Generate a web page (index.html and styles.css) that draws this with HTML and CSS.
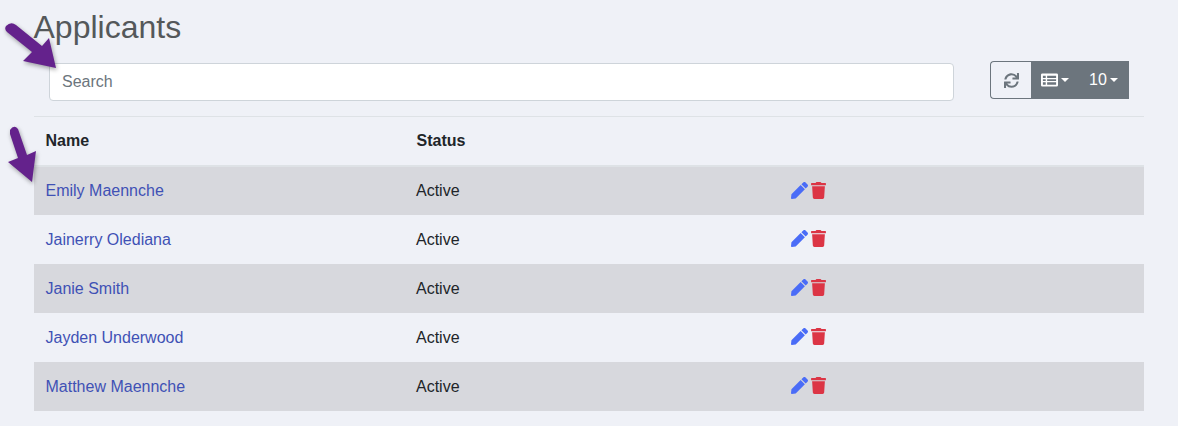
FILE: index.html
```html
<!DOCTYPE html>
<html lang="en">
<head>
<meta charset="utf-8">
<title>Applicants</title>
<link rel="stylesheet" href="styles.css">
</head>
<body>
<main class="page">
  <h1 class="title">Applicants</h1>
  <div class="toolbar">
    <input class="search" type="text" placeholder="Search">
    <div class="btn-group">
      <button class="btn btn-outline" type="button" aria-label="Refresh">
        <svg class="ic-refresh" viewBox="0 0 512 512"><path fill="#6c757d" d="M440.65 12.57l4 82.77A247.16 247.16 0 0 0 255.83 8C134.73 8 33.91 94.92 12.29 209.82A12 12 0 0 0 24.09 224h49.05a12 12 0 0 0 11.67-9.26 175.91 175.91 0 0 1 317-56.94l-101.46-4.86a12 12 0 0 0-12.57 12v47.41a12 12 0 0 0 12 12H500a12 12 0 0 0 12-12V12a12 12 0 0 0-12-12h-47.37a12 12 0 0 0-11.98 12.57zM255.83 432a175.61 175.61 0 0 1-146-77.8l101.8 4.87a12 12 0 0 0 12.57-12v-47.4a12 12 0 0 0-12-12H12a12 12 0 0 0-12 12V500a12 12 0 0 0 12 12h47.35a12 12 0 0 0 12-12.6l-4.15-82.57A247.17 247.17 0 0 0 255.83 504c121.11 0 221.93-86.92 243.55-201.82a12 12 0 0 0-11.8-14.18h-49.05a12 12 0 0 0-11.67 9.26A175.86 175.86 0 0 1 255.83 432z"/></svg>
      </button>
      <button class="btn btn-solid btn-columns" type="button" aria-label="Columns">
        <svg class="ic-table" viewBox="0 0 18 14"><path fill="#fff" fill-rule="evenodd" d="M1.500 0h15A1.500 1.500 0 0 1 18 1.500v11a1.500 1.500 0 0 1-1.500 1.500h-15A1.500 1.500 0 0 1 0 12.500v-11A1.500 1.500 0 0 1 1.500 0zM2 2.500V5h3V2.500zM6.500 2.500V5H16V2.500zM2 6.200v1.800h3V6.200zM6.500 6.200v1.800H16V6.200zM2 9.300V12h3V9.300zM6.500 9.300V12H16V9.300z"/></svg>
        <span class="caret"></span>
      </button>
      <button class="btn btn-solid btn-size" type="button">10<span class="caret"></span></button>
    </div>
  </div>
  <table class="grid">
    <thead>
      <tr><th class="col-name">Name</th><th class="col-status">Status</th><th></th></tr>
    </thead>
    <tbody>
      <tr><td><a href="#">Emily Maennche</a></td><td>Active</td><td class="actions"><svg class="ic-pen" viewBox="0 0 512 512"><use href="#pen"/></svg><svg class="ic-trash" viewBox="0 0 448 512"><use href="#trash"/></svg></td></tr>
      <tr><td><a href="#">Jainerry Olediana</a></td><td>Active</td><td class="actions"><svg class="ic-pen" viewBox="0 0 512 512"><use href="#pen"/></svg><svg class="ic-trash" viewBox="0 0 448 512"><use href="#trash"/></svg></td></tr>
      <tr><td><a href="#">Janie Smith</a></td><td>Active</td><td class="actions"><svg class="ic-pen" viewBox="0 0 512 512"><use href="#pen"/></svg><svg class="ic-trash" viewBox="0 0 448 512"><use href="#trash"/></svg></td></tr>
      <tr><td><a href="#">Jayden Underwood</a></td><td>Active</td><td class="actions"><svg class="ic-pen" viewBox="0 0 512 512"><use href="#pen"/></svg><svg class="ic-trash" viewBox="0 0 448 512"><use href="#trash"/></svg></td></tr>
      <tr><td><a href="#">Matthew Maennche</a></td><td>Active</td><td class="actions"><svg class="ic-pen" viewBox="0 0 512 512"><use href="#pen"/></svg><svg class="ic-trash" viewBox="0 0 448 512"><use href="#trash"/></svg></td></tr>
    </tbody>
  </table>
</main>

<svg class="arrow arrow-search" viewBox="0 0 60 50"><path d="M3 4 Q8 -1 13 3 L39 24 L46 16 L53 46 L20 39 L29 30 L4 10 Q1 7 3 4Z"/></svg>
<svg class="arrow arrow-row" viewBox="0 0 40 60"><path d="M9 5 Q13 -1 17 4 L26 30 L35 26 L31 57 L7 37 L17 33 L9 9Z"/></svg>

<svg class="defs" aria-hidden="true">
  <defs>
    <path id="pen" fill="#4a6cf7" d="M290.740 93.240l128.020 128.020-277.990 277.990-114.140 12.600C11.350 513.540-1.560 500.620.14 485.340l12.700-114.220 277.900-277.880zm207.200-19.060l-60.110-60.110c-18.750-18.750-49.160-18.750-67.910 0l-56.550 56.550 128.020 128.020 56.550-56.550c18.750-18.760 18.750-49.160 0-67.910z"/>
    <path id="trash" fill="#dc3545" d="M432 32H312l-9.400-18.700A24 24 0 0 0 281.100 0H166.800a23.720 23.720 0 0 0-21.400 13.300L136 32H16A16 16 0 0 0 0 48v32a16 16 0 0 0 16 16h416a16 16 0 0 0 16-16V48a16 16 0 0 0-16-16zM53.200 467a48 48 0 0 0 47.900 45h245.800a48 48 0 0 0 47.900-45L416 128H32z"/>
  </defs>
</svg>
</body>
</html>
```
FILE: styles.css
```css
* { box-sizing: border-box; }

body {
  margin: 0;
  background: #eff1f7;
  font-family: "Liberation Sans", Arial, sans-serif;
  font-size: 16px;
  color: #212529;
  position: relative;
  overflow: hidden;
  height: 426px;
}

.page {
  width: 1110px;
  margin-left: 34px;
  padding-top: 8px;
}

.title {
  margin: 0 0 15px -0.5px;
  font-size: 32px;
  font-weight: 400;
  line-height: 38px;
  color: #54585a;
}

.toolbar {
  display: flex;
  align-items: flex-start;
  justify-content: space-between;
  padding: 0 15px;
  height: 56px;
  border-bottom: 1px solid #dee2e6;
}

.search {
  width: 905px;
  height: 38px;
  margin-top: 2px;
  padding: 6px 12px;
  font: 16px "Liberation Sans", Arial, sans-serif;
  color: #495057;
  background: #fff;
  border: 1px solid #ced4da;
  border-radius: 4px;
}

.search::placeholder { color: #6c757d; opacity: 1; }

.btn-group { display: flex; height: 38px; }

.btn {
  display: flex;
  align-items: center;
  justify-content: center;
  height: 38px;
  padding: 0;
  font: 16px "Liberation Sans", Arial, sans-serif;
  border: 1px solid #6c757d;
}

.btn-outline {
  width: 41px;
  background: transparent;
  border-right: 0;
  border-radius: 4px 0 0 4px;
}

.btn-solid { background: #6c757d; color: #fff; }
.btn-columns { width: 49px; padding-right: 2px; }
.btn-size { width: 49px; padding-right: 2px; }

.ic-refresh { width: 15px; height: 15px; }
.ic-table { width: 17px; height: 14px; }

.caret {
  margin-left: 3px;
  border-top: 4px solid #fff;
  border-left: 4px solid transparent;
  border-right: 4px solid transparent;
}

.grid {
  width: 1110px;
  border-collapse: collapse;
  table-layout: fixed;
}

.grid th {
  height: 49px;
  padding: 0 11.5px;
  text-align: left;
  font-weight: 700;
  color: #212529;
  border-bottom: 2px solid #dee2e6;
}

.col-name { width: 370px; }
.col-status { width: 370px; padding-left: 12.5px !important; }

.grid td {
  height: 49px;
  padding: 0 11.5px;
  vertical-align: middle;
}

.grid tbody tr:nth-child(odd) { background: #d7d8dd; }

.grid a { color: #3f51b5; text-decoration: none; }

.grid td:nth-child(2) { padding-left: 12px; }
.grid td.actions { padding-left: 17px; font-size: 0; line-height: 0; }

.ic-pen { width: 17px; height: 17px; margin-bottom: 2px; vertical-align: middle; }
.ic-trash { width: 15px; height: 17px; margin: 0 0 2px 3px; vertical-align: middle; }

.arrow {
  position: absolute;
  fill: #64228c;
  filter: drop-shadow(1px 2px 2px rgba(0, 0, 0, 0.35));
}

.arrow-search { left: 3px; top: 22px; width: 60px; height: 50px; }
.arrow-row { left: 1px; top: 125px; width: 40px; height: 60px; }

.defs { position: absolute; width: 0; height: 0; }
```
